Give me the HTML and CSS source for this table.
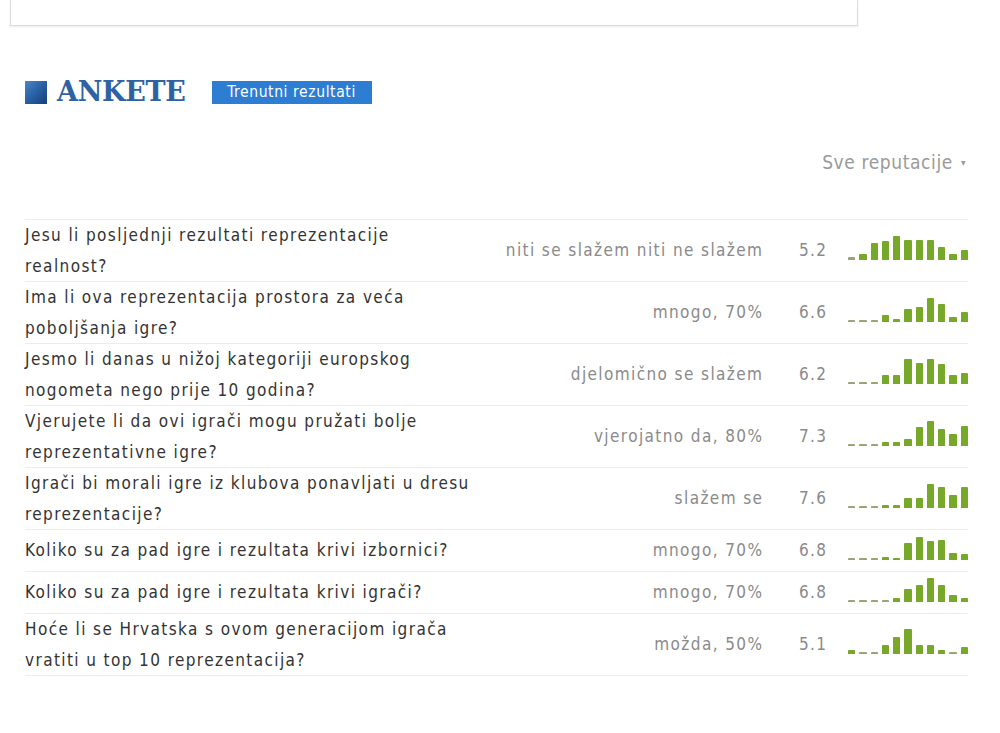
FILE: index.html
```html
<!DOCTYPE html>
<html lang="hr">
<head>
<meta charset="utf-8">
<title>Ankete</title>
<link rel="stylesheet" href="styles.css">
</head>
<body>
<div class="topbox"></div>

<div class="content">
  <div class="head">
    <span class="head-square"></span>
    <h2 class="head-title">ANKETE</h2>
    <span class="head-tab">Trenutni rezultati</span>
  </div>

  <div class="filter">Sve reputacije <span class="caret">&#9662;</span></div>

  <div class="polls">
    <div class="row">
      <div class="q">Jesu li posljednji rezultati reprezentacije realnost?</div>
      <div class="a">niti se slažem niti ne slažem</div>
      <div class="s">5.2</div>
      <div class="chart"><i style="height:3px" class="d"></i><i style="height:6px"></i><i style="height:17px"></i><i style="height:19px"></i><i style="height:24px"></i><i style="height:20px"></i><i style="height:20px"></i><i style="height:20px"></i><i style="height:13px"></i><i style="height:6px"></i><i style="height:10px"></i></div>
    </div>
    <div class="row">
      <div class="q">Ima li ova reprezentacija prostora za veća poboljšanja igre?</div>
      <div class="a">mnogo, 70%</div>
      <div class="s">6.6</div>
      <div class="chart"><i style="height:2px" class="d"></i><i style="height:2px" class="d"></i><i style="height:2px" class="d"></i><i style="height:7px"></i><i style="height:3px"></i><i style="height:13px"></i><i style="height:15px"></i><i style="height:24px"></i><i style="height:18px"></i><i style="height:5px"></i><i style="height:10px"></i></div>
    </div>
    <div class="row">
      <div class="q">Jesmo li danas u nižoj kategoriji europskog nogometa nego prije 10 godina?</div>
      <div class="a">djelomično se slažem</div>
      <div class="s">6.2</div>
      <div class="chart"><i style="height:2px" class="d"></i><i style="height:2px" class="d"></i><i style="height:2px" class="d"></i><i style="height:9px"></i><i style="height:9px"></i><i style="height:25px"></i><i style="height:21px"></i><i style="height:25px"></i><i style="height:20px"></i><i style="height:9px"></i><i style="height:11px"></i></div>
    </div>
    <div class="row">
      <div class="q">Vjerujete li da ovi igrači mogu pružati bolje reprezentativne igre?</div>
      <div class="a">vjerojatno da, 80%</div>
      <div class="s">7.3</div>
      <div class="chart"><i style="height:2px" class="d"></i><i style="height:2px" class="d"></i><i style="height:2px" class="d"></i><i style="height:4px"></i><i style="height:4px"></i><i style="height:7px"></i><i style="height:19px"></i><i style="height:25px"></i><i style="height:17px"></i><i style="height:12px"></i><i style="height:20px"></i></div>
    </div>
    <div class="row">
      <div class="q">Igrači bi morali igre iz klubova ponavljati u dresu reprezentacije?</div>
      <div class="a">slažem se</div>
      <div class="s">7.6</div>
      <div class="chart"><i style="height:2px" class="d"></i><i style="height:2px" class="d"></i><i style="height:2px" class="d"></i><i style="height:3px"></i><i style="height:3px"></i><i style="height:10px"></i><i style="height:10px"></i><i style="height:24px"></i><i style="height:21px"></i><i style="height:13px"></i><i style="height:21px"></i></div>
    </div>
    <div class="row">
      <div class="q">Koliko su za pad igre i rezultata krivi izbornici?</div>
      <div class="a">mnogo, 70%</div>
      <div class="s">6.8</div>
      <div class="chart"><i style="height:2px" class="d"></i><i style="height:2px" class="d"></i><i style="height:2px" class="d"></i><i style="height:3px"></i><i style="height:2px"></i><i style="height:17px"></i><i style="height:23px"></i><i style="height:19px"></i><i style="height:20px"></i><i style="height:7px"></i><i style="height:6px"></i></div>
    </div>
    <div class="row">
      <div class="q">Koliko su za pad igre i rezultata krivi igrači?</div>
      <div class="a">mnogo, 70%</div>
      <div class="s">6.8</div>
      <div class="chart"><i style="height:2px" class="d"></i><i style="height:2px" class="d"></i><i style="height:2px" class="d"></i><i style="height:2px" class="d"></i><i style="height:4px"></i><i style="height:13px"></i><i style="height:17px"></i><i style="height:24px"></i><i style="height:17px"></i><i style="height:7px"></i><i style="height:4px"></i></div>
    </div>
    <div class="row">
      <div class="q">Hoće li se Hrvatska s ovom generacijom igrača vratiti u top 10 reprezentacija?</div>
      <div class="a">možda, 50%</div>
      <div class="s">5.1</div>
      <div class="chart"><i style="height:4px"></i><i style="height:2px" class="d"></i><i style="height:2px" class="d"></i><i style="height:9px"></i><i style="height:17px"></i><i style="height:25px"></i><i style="height:9px"></i><i style="height:9px"></i><i style="height:4px"></i><i style="height:2px" class="d"></i><i style="height:7px"></i></div>
    </div>
  </div>
</div>
</body>
</html>
```
FILE: styles.css
```css
* { box-sizing: border-box; }

html, body {
  margin: 0;
  padding: 0;
  background: #fff;
}

body {
  font-family: "DejaVu Sans Condensed", "DejaVu Sans", sans-serif;
  color: #333;
}

.topbox {
  margin-left: 10px;
  width: 848px;
  height: 26px;
  border: 1px solid #dcdcdc;
  border-top: none;
  box-shadow: 0 1px 2px rgba(0,0,0,0.08);
}

.content {
  padding: 54px 32px 0 25px;
}

.head {
  display: flex;
  align-items: center;
  height: 24px;
}

.head-square {
  width: 22px;
  height: 23px;
  background: linear-gradient(135deg, #4f86c6 0%, #2a63a8 45%, #163f78 100%);
  margin-right: 10px;
}

.head-title {
  margin: 0;
  font-family: "DejaVu Serif", serif;
  font-weight: bold;
  font-size: 27px;
  line-height: 24px;
  letter-spacing: -0.3px;
  color: #2e62a3;
  margin-right: 26px;
}

.head-tab {
  width: 160px;
  height: 23px;
  background: #2d7dd2;
  color: #fff;
  font-size: 15.5px;
  line-height: 23px;
  text-align: center;
  letter-spacing: 0.6px;
}

.filter {
  margin-top: 44px;
  text-align: right;
  font-size: 19px;
  line-height: 28px;
  color: #9a9a9a;
  letter-spacing: 0.6px;
  padding-right: 2px;
}

.caret {
  font-size: 10px;
  vertical-align: 3px;
  margin-left: 2px;
}

.polls {
  margin-top: 42px;
  border-top: 1px solid #ececec;
}

.row {
  display: grid;
  grid-template-columns: 448px 1fr 64px 22px 120px;
  align-items: center;
  min-height: 42px;
  border-bottom: 1px solid #ececec;
}

.q,
.a,
.s {
  font-size: 17px;
  line-height: 30.5px;
  letter-spacing: 1.4px;
}

.q {
  color: #333;
}

.a {
  text-align: right;
  color: #8a8a8a;
  margin-right: -1.4px;
}

.s {
  grid-column: 3;
  text-align: right;
  color: #8a8a8a;
  margin-right: -1.4px;
}

.chart {
  grid-column: 5;
  display: flex;
  align-items: flex-end;
  gap: 4px;
  height: 25px;
  margin-bottom: 7px;
  align-self: center;
}

.chart i {
  flex: 1;
  display: block;
  background: #78a82a;
  border-radius: 1px 1px 0 0;
}

.chart i.d {
  background: #9aa474;
}
```
